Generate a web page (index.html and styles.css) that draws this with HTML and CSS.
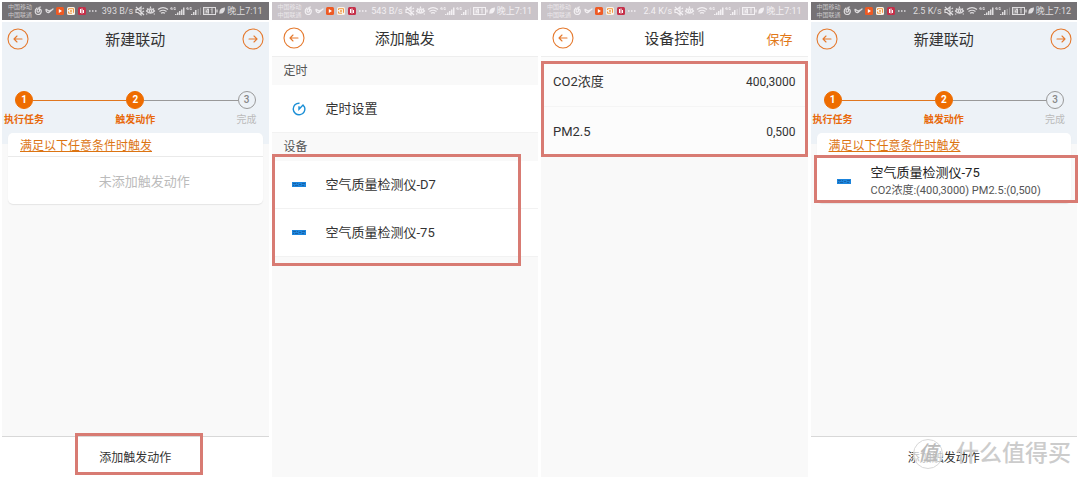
FILE: index.html
```html
<!DOCTYPE html>
<html lang="zh-CN">
<head>
<meta charset="utf-8">
<meta name="viewport" content="width=device-width, initial-scale=1">
<title>新建联动</title>
<link rel="stylesheet" href="styles.css">
</head>
<body>
<svg class="defs" aria-hidden="true">
  <symbol id="apps" viewBox="0 0 64 12">
    <g fill="none" stroke="currentColor" stroke-width="1.200" stroke-linecap="round">
      <path d="M3 3C0 5 1 9.500 4 9.500C7.500 9.500 8.500 5 5.500 3.800C3 3 2.200 7 4.200 7.200C6.200 7.200 5.500 4.500 5 2.500L6.500 2"/>
      <path d="M12 4.500C12 7 13.500 8 15 7.500L19 4M12.500 4.500L15 6L18.500 4.500" stroke-width="1.300"/>
    </g>
    <rect x="22" y="2" width="8" height="8" rx="1.500" fill="#ee5a24"/>
    <path d="M24.800 4L28 6L24.800 8Z" fill="#fff"/>
    <rect x="33" y="2" width="8" height="8" rx="1.500" fill="#faf3e8"/>
    <path d="M34.500 5V3.700H39.500V7.800M34.500 6.500V8.200H38" fill="none" stroke="#f19a45" stroke-width="1"/>
    <circle cx="37" cy="6" r="1" fill="#f19a45"/>
    <rect x="44" y="2" width="8" height="8" rx="1.500" fill="#c62f49"/>
    <path d="M46.500 4V8M48 3.500V8.500M49.500 5V8" stroke="#fff" stroke-width="1"/>
    <path d="M55 6h1.500M58 6h1.500M61 6h1.500" stroke="currentColor" stroke-width="1.400"/>
  </symbol>
  <symbol id="signals" viewBox="0 0 90 12">
    <g fill="none" stroke="currentColor" stroke-width="1.200">
      <path d="M1 4.500H3L6 2V10L3 7.500H1ZM1 2L9 10M7.500 4L9 3M7.500 7L9 6"/>
      <path d="M11.500 6Q15.500 1.500 19.500 6Q15.500 10.500 11.500 6ZM12 3.500L13 4.500M15.500 1.500V3M19 3.500L18 4.500M12 8.500L11.500 9.500M19 8.500L19.500 9.500"/>
      <circle cx="15.500" cy="6" r="1.300"/>
      <path d="M23 4.500Q28 .8 33 4.500M24.500 6.500Q28 4 31.500 6.500M26 8.300Q28 7 30 8.300"/>
      <path d="M36.500 2L35.500 4H37.500M37 2.500V5M40.500 2.500H39V4.500H40.500V3.500M52.500 2L51.500 4H53.500M53 2.500V5M56.500 2.500H55V4.500H56.500V3.500" stroke-width=".8"/>
      <rect x="68.500" y="2.500" width="12" height="7" stroke-width="1"/>
      <path d="M82 4.500V7.500"/>
    </g>
    <path d="M40 9h1.500v1H40zM42 7.500h1.500V10H42zM44 6h1.500v4H44zM46 4.500h1.500V10H46zM48 2.500h1.500V10H48zM56 9h1.500v1H56zM58 7h1.500v3H58zM60 5h1.500v5H60z" fill="currentColor"/>
    <path d="M62.500 4h1.500v6h-1.500zM65 2.500h1V10h-1z" fill="currentColor" opacity=".35"/>
    <rect x="69" y="3" width="5" height="6" fill="currentColor" opacity=".35"/>
    <path d="M73 3.500L71 7H74M73.500 4V8.500M76 4.500L77 3.500V8.500" fill="none" stroke="currentColor" stroke-width="1"/>
    <path d="M84.500 9C84 4.500 86 3 90 2.500C90 7 88 9 85.500 8.500Z" fill="currentColor"/>
  </symbol>
  <symbol id="back" viewBox="0 0 22 22">
    <g fill="none" stroke="currentColor" stroke-width="1.100" stroke-linecap="round" stroke-linejoin="round">
      <circle cx="11" cy="11" r="10"/>
      <path d="M15 11H7M10 8L7 11L10 14"/>
    </g>
  </symbol>
  <symbol id="next" viewBox="0 0 22 22">
    <g fill="none" stroke="currentColor" stroke-width="1.100" stroke-linecap="round" stroke-linejoin="round">
      <circle cx="11" cy="11" r="10"/>
      <path d="M7 11H15M12 8L15 11L12 14"/>
    </g>
  </symbol>
  <symbol id="timer" viewBox="0 0 14 14">
    <path d="M7.500 1.200A5.800 5.800 0 1 0 12.500 5L11 3L7 7.300V4.300" fill="none" stroke="#1b8fd6" stroke-width="1.400"/>
  </symbol>
  <symbol id="sensor" viewBox="0 0 14 5">
    <rect width="14" height="5" fill="#1b84dc"/>
    <path d="M1 1.500H4M5 1.500H6M7 2.500H9M10 1.500H13M1 3.500H2M3 3.500H6M10 3.500H12" stroke="#1762a8" stroke-width="1"/>
  </symbol>
</svg>

<main class="screens">
  <section class="screen">
    <div class="status status-dark">
      <span class="carriers">中国移动<br>中国联通</span>
      <svg class="apps"><use href="#apps"/></svg>
      <span class="speed">393 B/s</span>
      <svg class="signals"><use href="#signals"/></svg>
      <span>晚上7:11</span>
    </div>
    <div class="hero">
      <header class="bar">
        <button class="round" aria-label="返回"><svg><use href="#back"/></svg></button>
        <h1>新建联动</h1>
        <button class="round end" aria-label="下一步"><svg><use href="#next"/></svg></button>
      </header>
      <ol class="steps">
        <li class="step done"><span class="dot">1</span><span>执行任务</span></li>
        <li class="line line-done"></li>
        <li class="step done"><span class="dot">2</span><span>触发动作</span></li>
        <li class="line"></li>
        <li class="step"><span class="dot">3</span><span>完成</span></li>
      </ol>
    </div>
    <div class="card">
      <div class="card-head"><a href="#">满足以下任意条件时触发</a></div>
      <p class="empty">未添加触发动作</p>
    </div>
    <footer class="foot">
      <button class="add">添加触发动作</button>
      <div class="mark mark-add"></div>
    </footer>
  </section>

  <section class="screen">
    <div class="status status-light">
      <span class="carriers">中国移动<br>中国联通</span>
      <svg class="apps"><use href="#apps"/></svg>
      <span class="speed">543 B/s</span>
      <svg class="signals"><use href="#signals"/></svg>
      <span>晚上7:11</span>
    </div>
    <header class="bar bar-white">
      <button class="round" aria-label="返回"><svg><use href="#back"/></svg></button>
      <h1>添加触发</h1>
    </header>
    <h2 class="group">定时</h2>
    <ul class="list">
      <li class="row"><svg class="timer"><use href="#timer"/></svg><span>定时设置</span></li>
    </ul>
    <h2 class="group">设备</h2>
    <ul class="list">
      <li class="row"><svg class="sensor"><use href="#sensor"/></svg><span>空气质量检测仪-D7</span></li>
      <li class="row"><svg class="sensor"><use href="#sensor"/></svg><span>空气质量检测仪-75</span></li>
      <li class="mark mark-devices" aria-hidden="true"></li>
    </ul>
  </section>

  <section class="screen">
    <div class="status status-light">
      <span class="carriers">中国移动<br>中国联通</span>
      <svg class="apps"><use href="#apps"/></svg>
      <span class="speed">2.4 K/s</span>
      <svg class="signals"><use href="#signals"/></svg>
      <span>晚上7:11</span>
    </div>
    <header class="bar bar-white">
      <button class="round" aria-label="返回"><svg><use href="#back"/></svg></button>
      <h1>设备控制</h1>
      <button class="save end">保存</button>
    </header>
    <dl class="values">
      <div class="value"><dt>CO2浓度</dt><dd>400,3000</dd></div>
      <div class="value"><dt>PM2.5</dt><dd>0,500</dd></div>
      <div class="mark mark-values"></div>
    </dl>
  </section>

  <section class="screen">
    <div class="status status-dark">
      <span class="carriers">中国移动<br>中国联通</span>
      <svg class="apps"><use href="#apps"/></svg>
      <span class="speed">2.5 K/s</span>
      <svg class="signals"><use href="#signals"/></svg>
      <span>晚上7:12</span>
    </div>
    <div class="hero">
      <header class="bar">
        <button class="round" aria-label="返回"><svg><use href="#back"/></svg></button>
        <h1>新建联动</h1>
        <button class="round end" aria-label="下一步"><svg><use href="#next"/></svg></button>
      </header>
      <ol class="steps">
        <li class="step done"><span class="dot">1</span><span>执行任务</span></li>
        <li class="line line-done"></li>
        <li class="step done"><span class="dot">2</span><span>触发动作</span></li>
        <li class="line"></li>
        <li class="step"><span class="dot">3</span><span>完成</span></li>
      </ol>
    </div>
    <div class="card">
      <div class="card-head"><a href="#">满足以下任意条件时触发</a></div>
      <div class="trigger">
        <svg class="sensor"><use href="#sensor"/></svg>
        <div>
          <p class="name">空气质量检测仪-75</p>
          <p class="detail">CO2浓度:(400,3000) PM2.5:(0,500)</p>
        </div>
        <div class="mark mark-trigger"></div>
      </div>
    </div>
    <footer class="foot">
      <button class="add">添加触发动作</button>
      <div class="watermark"><span class="seal">值</span><span>什么值得买</span></div>
    </footer>
  </section>
</main>
</body>
</html>
```

FILE: styles.css
```css
* {
  box-sizing: border-box;
  margin: 0;
  padding: 0;
}

body {
  background: #fff;
  color: #333;
  font-family: Roboto, "Noto Sans CJK SC", sans-serif;
  font-size: 13px;
  line-height: 18px;
}

button {
  border: 0;
  background: none;
  color: inherit;
  font: inherit;
}

ul,
ol {
  list-style: none;
}

svg {
  display: block;
  flex: none;
}

.defs {
  position: absolute;
  width: 0;
  height: 0;
}

.screens {
  display: grid;
  grid-template-columns: repeat(4, 1fr);
  gap: 3px;
  min-height: 100vh;
  padding: 2px 3px 2px 2px;
}

.screen {
  display: flex;
  flex-direction: column;
  min-width: 0;
  background: #f9f9f9;
}

/* Status bar */
.status {
  display: flex;
  align-items: center;
  height: 18px;
  padding: 0 6px;
  font-size: 9px;
  white-space: nowrap;
}

.status-dark {
  background: #757275;
  color: #dedcde;
}

.status-light {
  background: #cac4c9;
  color: #f3f0f3;
}

.carriers {
  width: 24px;
  font-size: 6px;
  line-height: 8px;
  opacity: 0.8;
}

.apps {
  width: 64px;
  height: 12px;
  margin-left: 2px;
}

.speed {
  margin-left: auto;
}

.signals {
  width: 90px;
  height: 12px;
  margin: 0 2px;
}

/* Title bar */
.hero {
  height: 124px;
  border-top: 2px solid #fff;
  background: #edf2f7;
}

.bar {
  display: grid;
  grid-template-columns: 1fr auto 1fr;
  align-items: center;
  height: 34px;
  padding: 0 5px;
}

.bar-white {
  height: 37px;
  padding: 0 11px;
  border-bottom: 1px solid #eee;
  background: #fff;
}

.bar h1 {
  padding-top: 2px;
  font-size: 15px;
  font-weight: 400;
  line-height: 22px;
}

.round {
  width: 22px;
  height: 22px;
  color: #e5792d;
}

.round svg {
  width: 22px;
  height: 22px;
}

.end {
  justify-self: end;
}

.save {
  padding-top: 4px;
  margin-right: 4px;
  color: #e17818;
}

/* Progress steps */
.steps {
  display: flex;
  align-items: flex-start;
  padding: 35px 13px 0;
  color: #bbb;
  font-size: 10px;
  line-height: 14px;
}

.step {
  display: flex;
  flex-direction: column;
  align-items: center;
  gap: 4px;
  width: 18px;
  white-space: nowrap;
}

.dot {
  width: 18px;
  height: 18px;
  border: 1px solid #999;
  border-radius: 50%;
  color: #888;
  font-weight: 500;
  line-height: 16px;
  text-align: center;
}

.step.done {
  color: #e8690b;
  font-weight: 700;
}

.step.done .dot {
  border-color: #ee6c00;
  background: #ee6c00;
  color: #fff;
  font-weight: 700;
}

.line {
  flex: 1;
  height: 1px;
  margin-top: 9px;
  background: #999;
}

.line-done {
  background: #e0761f;
}

/* Condition card */
.card {
  margin: -11px 6px 0;
  border-radius: 5px;
  background: #fff;
  box-shadow: 0 1px 1px #e5e5e5;
}

.card-head {
  height: 24px;
  padding: 4px 12px 0;
  border-bottom: 1px solid #eaeaea;
  font-size: 12px;
}

.card-head a {
  color: #dc7412;
}

.empty {
  padding: 16px 0 13px 18px;
  color: #bbb;
  text-align: center;
}

.trigger {
  position: relative;
  display: flex;
  align-items: center;
  gap: 20px;
  height: 46px;
  padding: 4px 20px 0;
  white-space: nowrap;
}

.trigger .sensor {
  margin-bottom: 2px;
}

.name {
  color: #222;
}

.detail {
  color: #555;
  font-size: 11px;
}

.foot {
  position: relative;
  display: flex;
  justify-content: center;
  height: 41px;
  margin-top: auto;
  border-top: 1px solid #d8d8d8;
  background: #fff;
}

.add {
  padding: 2px 20px 0;
  font-size: 12px;
}

/* Lists */
.group {
  height: 28px;
  padding: 0 12px;
  color: #555;
  font-size: 12px;
  font-weight: 400;
  line-height: 28px;
}

.list {
  position: relative;
  background: #fff;
}

.row {
  display: flex;
  align-items: center;
  gap: 20px;
  height: 48px;
  padding: 0 20px;
  border-bottom: 1px solid #f2f2f2;
}

.timer {
  width: 14px;
  height: 14px;
}

.sensor {
  width: 14px;
  height: 5px;
}

.values {
  position: relative;
  background: #fcfcfc;
}

.value {
  display: flex;
  align-items: center;
  justify-content: space-between;
  height: 50px;
  padding: 0 12px;
  border-bottom: 1px solid #f5f5f5;
}

.value dd {
  font-size: 12px;
}

/* Red highlight frames */
.mark {
  position: absolute;
  border: 3px solid #d87b73;
  pointer-events: none;
}

.mark-add {
  top: -4px;
  left: calc(50% - 60px);
  width: 128px;
  height: 42px;
}

.mark-devices {
  inset: -7px 17px -9px 0;
}

.mark-values {
  inset: 4px 0 0;
}

.mark-trigger {
  inset: -2px -7px 0 -3px;
}

/* Watermark */
.watermark {
  position: absolute;
  right: 6px;
  bottom: 8px;
  display: flex;
  align-items: center;
  gap: 13px;
  color: #ccc;
  font-size: 23px;
  font-weight: 500;
  line-height: 30px;
  white-space: nowrap;
}

.seal {
  width: 30px;
  height: 30px;
  border: 1px solid #d8d8d8;
  border-radius: 50%;
  background: rgb(255 255 255 / 70%);
  color: #bbb;
  font-size: 20px;
  font-style: italic;
  line-height: 26px;
  text-align: center;
}
```
